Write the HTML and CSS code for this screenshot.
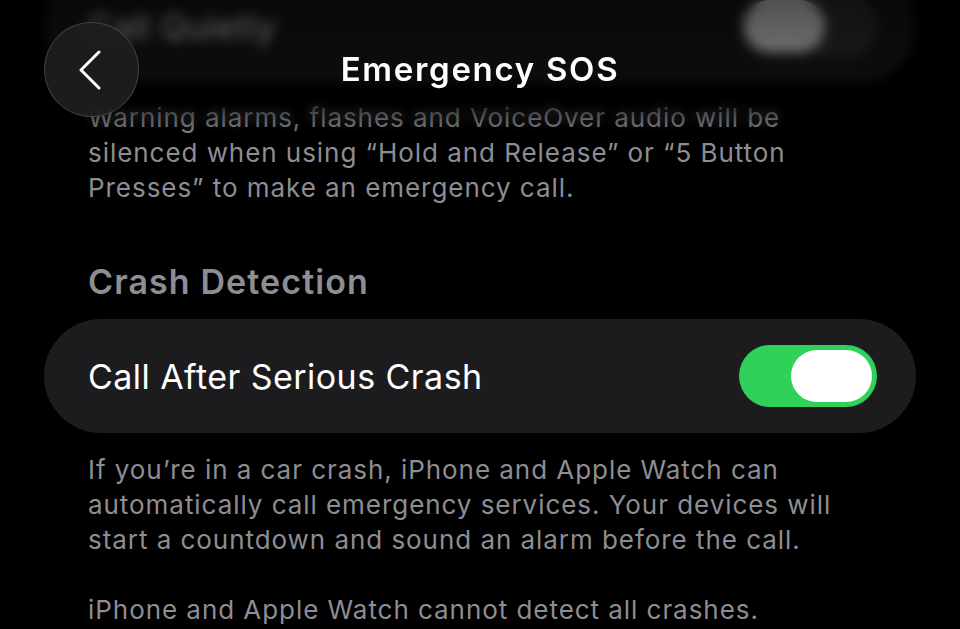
FILE: index.html
```html
<!DOCTYPE html>
<html lang="en">

<head>
  <meta charset="UTF-8">
  <meta name="viewport" content="width=device-width, initial-scale=1.0">
  <title>Emergency SOS</title>
  <link rel="stylesheet" href="styles.css">
</head>

<body>
  <div class="screen">
    <div class="content">
      <div class="card">
        <span class="card-label">Call Quietly</span>
        <div class="switch"><div class="knob"></div></div>
      </div>
      <p class="footer first">Warning alarms, flashes and VoiceOver audio will be silenced when using “Hold and Release” or “5 Button Presses” to make an emergency call.</p>

      <h2 class="section-title">Crash Detection</h2>
      <div class="card">
        <span class="card-label">Call After Serious Crash</span>
        <div class="switch on"><div class="knob"></div></div>
      </div>
      <p class="footer">If you’re in a car crash, iPhone and Apple Watch can automatically call emergency services. Your devices will start a countdown and sound an alarm before the call.</p>
      <p class="footer">iPhone and Apple Watch cannot detect all crashes.</p>
    </div>

    <!-- blurred strip under the nav bar -->
    <div class="nav-blur"></div>

    <div class="nav">
      <button class="back" aria-label="Back">
        <svg width="24" height="40" viewBox="0 0 24 40">
          <path d="M21 2 L3 20 L21 38" fill="none" stroke="#fff" stroke-width="3" stroke-linecap="round" stroke-linejoin="round" />
        </svg>
      </button>
      <h1 class="nav-title">Emergency SOS</h1>
      <div></div>
    </div>
  </div>
</body>

</html>
```

FILE: styles.css
```css
body {
  margin: 0;
  background-color: #000;
  font-family: Inter, "Noto Sans", sans-serif;
  color: #fff;
}

.screen {
  position: relative;
  width: 960px;
  height: 629px;
  overflow: hidden;
}

.content {
  padding: 0 44px;
  margin-top: -31px;
}

.card {
  height: 114px;
  border-radius: 57px;
  background: #1c1c1e;
  display: flex;
  align-items: center;
  justify-content: space-between;
  padding: 0 39px 0 44px;
}

.card-label {
  font-size: 34px;
  letter-spacing: 0.45px;
}

.switch {
  width: 138px;
  height: 62px;
  border-radius: 31px;
  background: #39393d;
  display: flex;
  align-items: center;
  padding: 0 5px;
  box-sizing: border-box;
}

.switch .knob {
  width: 81px;
  height: 52px;
  border-radius: 26px;
  background: #fff;
}

.switch.on {
  background: #30d158;
  justify-content: flex-end;
}

.footer {
  margin: 0;
  padding: 19px 44px 0;
  font-size: 26px;
  line-height: 35px;
  color: #8d8d93;
  letter-spacing: 0.95px;
}

.footer.first {
  padding-top: 17px;
}

.footer + .footer {
  margin-top: 35px;
  padding-top: 0;
}

.section-title {
  margin: 57px 0 17px;
  padding: 0 44px;
  font-size: 34px;
  line-height: 40px;
  font-weight: 600;
  color: #8d8d93;
  letter-spacing: 1.1px;
}

.nav-blur {
  position: absolute;
  top: 0;
  left: 0;
  right: 0;
  height: 140px;
  backdrop-filter: blur(6px);
  background: linear-gradient(to bottom, rgba(0, 0, 0, 0.68), rgba(0, 0, 0, 0.5) 65%, rgba(0, 0, 0, 0));
  -webkit-mask-image: linear-gradient(to bottom, #000 62%, transparent);
  mask-image: linear-gradient(to bottom, #000 62%, transparent);
}

.nav {
  position: absolute;
  top: 22px;
  left: 44px;
  right: 44px;
  display: grid;
  grid-template-columns: 95px 1fr 95px;
  align-items: center;
}

.back {
  width: 95px;
  height: 95px;
  border-radius: 50%;
  background: rgba(30, 30, 32, 0.94);
  border: 1px solid rgba(255, 255, 255, 0.16);
  display: flex;
  align-items: center;
  justify-content: center;
  padding: 0 4px 0 0;
}

.nav-title {
  margin: 0 0 2px;
  text-align: center;
  font-size: 33px;
  font-weight: 600;
  letter-spacing: 1.7px;
}
```
